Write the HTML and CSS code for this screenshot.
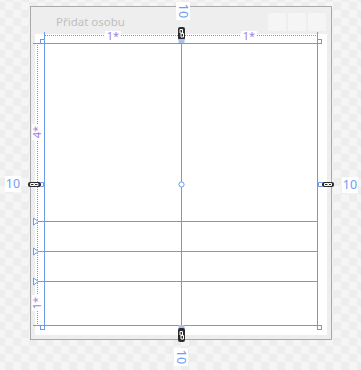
FILE: index.html
```html
<!DOCTYPE html>
<html>
<head>
<meta charset="utf-8">
<link rel="stylesheet" href="styles.css">
</head>
<body>
<div class="stage">
  <div class="window">
    <div class="titlebar">
      <span class="title">Přidat osobu</span>
      <div class="buttons"><span class="btn"></span><span class="btn"></span><span class="btn"></span></div>
    </div>
    <div class="client">
      <div class="grid">
        <div class="cell"></div><div class="cell"></div>
        <div class="cell"></div><div class="cell"></div>
        <div class="cell"></div><div class="cell"></div>
        <div class="cell"></div><div class="cell"></div>
      </div>
    </div>
  </div>

  <svg class="adorners" width="361" height="370" viewBox="0 0 361 370">
    <g class="rule">
      <line x1="45" y1="35.5" x2="317" y2="35.5" class="dots"/>
      <line x1="37.5" y1="45" x2="37.5" y2="325" class="dots"/>
      <line x1="44.5" y1="32" x2="44.5" y2="43"/>
      <line x1="317.5" y1="32" x2="317.5" y2="43"/>
      <line x1="33" y1="43.5" x2="44" y2="43.5"/>
      <line x1="33" y1="325.5" x2="44" y2="325.5"/>
      <line x1="38" y1="221.5" x2="44" y2="221.5"/>
      <line x1="38" y1="251.5" x2="44" y2="251.5"/>
      <line x1="38" y1="281.5" x2="44" y2="281.5"/>
      <rect x="40.5" y="39.5" width="4" height="4"/>
      <rect x="317.5" y="39.5" width="4" height="4"/>
      <rect x="40.5" y="325.5" width="4" height="4"/>
      <rect x="317.5" y="325.5" width="4" height="4"/>
      <polygon points="33.5,218 38.5,221.5 33.5,225"/>
      <polygon points="33.5,248 38.5,251.5 33.5,255"/>
      <polygon points="33.5,278 38.5,281.5 33.5,285"/>
      <circle cx="181.5" cy="184.5" r="2.6"/>
    </g>
    <g>
      <rect x="178" y="27" width="7" height="13" rx="2" fill="#2c2c2c"/>
      <rect x="178.5" y="39" width="6" height="4" fill="#a9c1ec"/>
      <path d="M180 29.5h2.5v3.5h-2.5zM181 33.5h2.5v3.5h-2.5z" fill="none" stroke="#fff" stroke-width="1"/>

      <rect x="178.5" y="325" width="6" height="4" fill="#a9c1ec"/>
      <rect x="178" y="328" width="7" height="14" rx="2" fill="#2c2c2c"/>
      <path d="M180 331.5h2.5v3.5h-2.5zM181 335.5h2.5v3.5h-2.5z" fill="none" stroke="#fff" stroke-width="1"/>

      <rect x="28" y="182" width="13" height="5" rx="2" fill="#2c2c2c"/>
      <path d="M30.5 183.5h3.5v2h-3.5zM34.5 183.5h3.5v2h-3.5z" fill="none" stroke="#fff" stroke-width="1"/>
      <path d="M40.5 182.5h3v4h-3" fill="none" stroke="#6b9be6" stroke-width="1"/>

      <rect x="322" y="182" width="12" height="5" rx="2" fill="#2c2c2c"/>
      <path d="M324.5 183.5h3.5v2h-3.5zM328.5 183.5h3v2h-3z" fill="none" stroke="#fff" stroke-width="1"/>
      <path d="M322.5 182.5h-4v4h4" fill="none" stroke="#6b9be6" stroke-width="1"/>
    </g>
  </svg>

  <span class="lbl col-a">1*</span>
  <span class="lbl col-b">1*</span>
  <span class="lbl row row-a">4*</span>
  <span class="lbl row row-b">1*</span>

  <span class="margin m-top">10</span>
  <span class="margin m-bottom">10</span>
  <span class="margin m-left">10</span>
  <span class="margin m-right">10</span>
</div>
</body>
</html>
```
FILE: styles.css
```css
html, body {
  margin: 0;
  padding: 0;
}
body {
  width: 361px;
  height: 370px;
  overflow: hidden;
  background-color: #f5f5f5;
  background-image: conic-gradient(#ededed 25%, transparent 0 50%, #ededed 0 75%, transparent 0);
  background-size: 16px 16px;
  background-position: 5px 2px;
  font-family: "Noto Sans", "Open Sans", sans-serif;
}
.stage {
  position: relative;
  width: 361px;
  height: 370px;
  padding-top: 6px;
  box-sizing: border-box;
}
.window {
  margin-left: 30px;
  width: 302px;
  height: 334px;
  box-sizing: border-box;
  border: 1px solid #aaaaaa;
  background: #eeeeee;
  display: flex;
  flex-direction: column;
}
.titlebar {
  height: 27px;
  display: flex;
  justify-content: space-between;
  align-items: flex-start;
  padding: 0 5px 0 25px;
}
.title {
  padding-top: 7px;
  font-size: 11.5px;
  line-height: 16px;
  color: #bfbfbf;
}
.buttons {
  display: flex;
  gap: 2px;
  padding-top: 6px;
}
.btn {
  width: 18px;
  height: 18px;
  border-radius: 2px;
  background: #f5f5f5;
}
.client {
  margin: 0 4px;
  height: 301px;
  box-sizing: border-box;
  background: #ffffff;
  padding: 9px;
}
.grid {
  display: grid;
  grid-template-columns: 136px 135px;
  grid-template-rows: 177px 29px 29px 43px;
  gap: 1px;
  padding: 1px;
  width: 274px;
  box-sizing: border-box;
  background: #6b9be6;
}
.cell {
  background: #ffffff;
}
.adorners {
  position: absolute;
  left: 0;
  top: 0;
}
.rule line,
.rule rect,
.rule polygon,
.rule circle {
  stroke: #6b9be6;
  stroke-width: 1;
  fill: #ffffff;
}
.rule .dots {
  stroke-dasharray: 1 1;
}
.lbl {
  position: absolute;
  width: 16px;
  height: 10px;
  background: #ffffff;
  color: #a27fe2;
  font-size: 11px;
  line-height: 10px;
  text-align: center;
}
.col-a { left: 105px; top: 31px; }
.col-b { left: 241px; top: 31px; }
.row { transform: rotate(-90deg); }
.row-a { left: 29px; top: 127px; }
.row-b { left: 29px; top: 298px; }
.margin {
  position: absolute;
  width: 16px;
  height: 16px;
  background: #ffffff;
  color: #6f9df0;
  font-size: 12.5px;
  line-height: 16px;
  text-align: center;
}
.m-left { left: 5px; top: 176px; }
.m-right { left: 342px; top: 177px; }
.m-top { left: 174px; top: 4px; width: 18px; height: 14px; line-height: 14px; transform: rotate(90deg); }
.m-bottom { left: 172px; top: 350px; width: 18px; height: 14px; line-height: 14px; transform: rotate(90deg); }
```
